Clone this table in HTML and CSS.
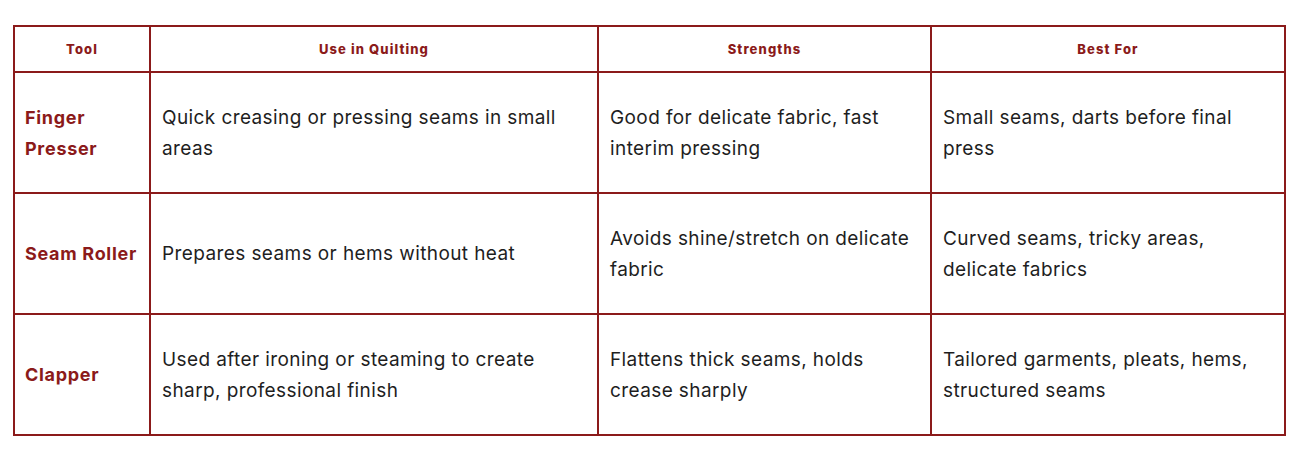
FILE: index.html
```html
<!DOCTYPE html>
<html>
<head>
<meta charset="utf-8">
<link rel="stylesheet" href="styles.css">
</head>
<body>
<div class="wrap">
<table class="tbl">
<colgroup>
<col class="c1"><col class="c2"><col class="c3"><col class="c4">
</colgroup>
<thead>
<tr><th>Tool</th><th>Use in Quilting</th><th>Strengths</th><th>Best For</th></tr>
</thead>
<tbody>
<tr><td class="name">Finger Presser</td><td>Quick creasing or pressing seams in small areas</td><td>Good for delicate fabric, fast interim pressing</td><td>Small seams, darts before final press</td></tr>
<tr><td class="name">Seam Roller</td><td>Prepares seams or hems without heat</td><td>Avoids shine/stretch on delicate fabric</td><td>Curved seams, tricky areas, delicate fabrics</td></tr>
<tr><td class="name">Clapper</td><td>Used after ironing or steaming to create sharp, professional finish</td><td>Flattens thick seams, holds crease sharply</td><td>Tailored garments, pleats, hems, structured seams</td></tr>
</tbody>
</table>
</div>
</body>
</html>
```
FILE: styles.css
```css
html, body { margin: 0; padding: 0; background: #fff; }
.wrap { padding: 25px 17px 0 13px; }
.tbl {
  width: 1271px;
  border-collapse: collapse;
  table-layout: fixed;
  font-family: Inter, "Noto Sans", sans-serif;
  color: #1e1e1e;
}
.c1 { width: 136px; }
.c2 { width: 448px; }
.c3 { width: 333px; }
.c4 { width: 354px; }
.tbl th, .tbl td {
  border: 2px solid #8b1a1a;
  vertical-align: middle;
}
.tbl th {
  height: 44px;
  padding: 0 10px;
  font-size: 13px;
  font-weight: 800;
  letter-spacing: 1.1px;
  color: #8b1a1a;
  text-align: center;
}
.tbl td {
  height: 119px;
  padding: 0 11px;
  font-size: 19px;
  line-height: 31px;
  letter-spacing: 0.4px;
  text-align: left;
}
.tbl td.name {
  font-size: 18px;
  font-weight: 700;
  color: #8b1a1a;
  letter-spacing: 0.7px;
  padding: 0 2px 0 10px;
}
```
